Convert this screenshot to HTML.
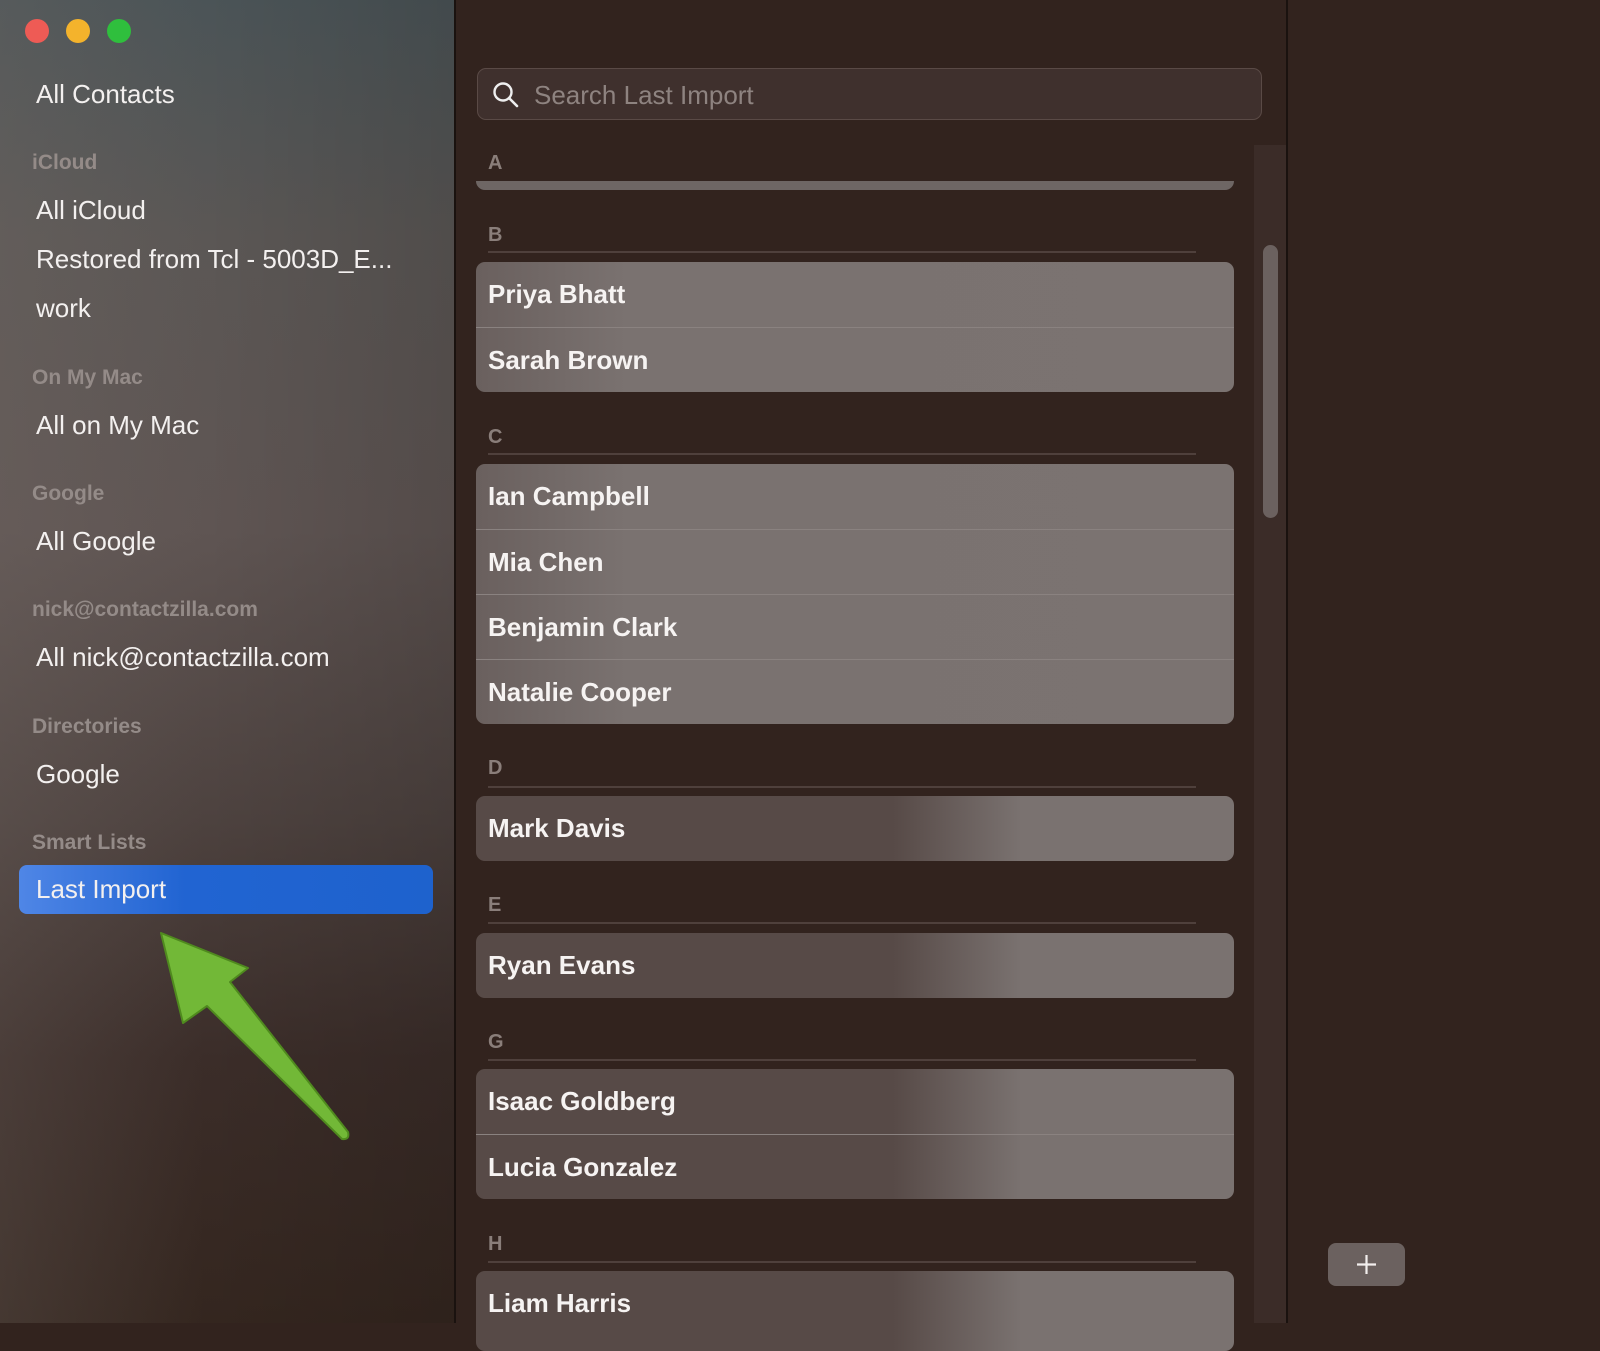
<!DOCTYPE html>
<html><head><meta charset="utf-8"><style>
*{margin:0;padding:0;box-sizing:border-box}
body{width:1600px;height:1323px;overflow:hidden;background:#32231e;font-family:"Liberation Sans",sans-serif;position:relative}
.side{position:absolute;left:0;top:0;width:454px;height:1323px;background:linear-gradient(180deg,#4b5457 0%,#5b5755 18%,#5f5553 40%,#4d423f 62%,#3b2d29 80%,#34261f 100%);}
.side:after{content:"";position:absolute;inset:0;background:linear-gradient(90deg,rgba(120,110,105,.25) 0%,rgba(0,0,0,0) 45%,rgba(0,0,0,.12) 100%)}
.divider{position:absolute;left:454px;top:0;width:2px;height:1323px;background:#1a120f}
.dot{position:absolute;top:19px;width:24px;height:24px;border-radius:50%}
.si{position:absolute;left:36px;color:#f3f0ef;font-size:26px;z-index:2;white-space:nowrap}
.sh{position:absolute;left:32px;color:#948b88;font-size:21px;font-weight:bold;z-index:2}
.sel{position:absolute;left:19px;top:865px;width:414px;height:49px;border-radius:8px;background:linear-gradient(90deg,#4f86e6,#2164d2 40%,#1e62cd);z-index:1}
.search{position:absolute;left:477px;top:68px;width:785px;height:52px;border-radius:9px;background:#3f302d;border:1.5px solid #5a4a46}
.search span{position:absolute;left:56px;top:11px;color:#8e8380;font-size:26px}
.lh{position:absolute;left:488px;color:#8a7e7a;font-size:20px;font-weight:bold}
.ln{position:absolute;left:488px;width:708px;height:2px;background:#4f403c}
.card{position:absolute;left:476px;width:758px;border-radius:9px;overflow:hidden;background:#766e6c}
.row{height:65px;line-height:65px;padding-left:12px;color:#f6f3f2;font-size:26px;font-weight:bold;border-top:1.5px solid #8a8280}
.row:first-child{border-top:none}
.grad{background:linear-gradient(90deg,#574a47 0%,#574a47 55%,#7a7270 72%,#7a7270 100%)}
.gradc{background:linear-gradient(90deg,#6a605e 0%,#7a7270 20%,#7b7371 100%)}
.track{position:absolute;left:1254px;top:145px;width:32px;height:1178px;background:#3b2c28}
.thumb{position:absolute;left:1263px;top:245px;width:15px;height:273px;border-radius:8px;background:#6b615f}
.rdiv{position:absolute;left:1286px;top:0;width:2px;height:1323px;background:#1a120f}
.plus{position:absolute;left:1328px;top:1243px;width:77px;height:43px;border-radius:8px;background:#6b615f}
</style></head><body>
<div class="side"></div>
<div class="dot" style="left:25px;background:#ee5b55"></div>
<div class="dot" style="left:66px;background:#f4b32c"></div>
<div class="dot" style="left:107px;background:#2fbf3d"></div>
<div class="si" style="top:79px">All Contacts</div>
<div class="sh" style="top:151px">iCloud</div>
<div class="si" style="top:195px">All iCloud</div>
<div class="si" style="top:244px">Restored from Tcl - 5003D_E...</div>
<div class="si" style="top:293px">work</div>
<div class="sh" style="top:366px">On My Mac</div>
<div class="si" style="top:410px">All on My Mac</div>
<div class="sh" style="top:482px">Google</div>
<div class="si" style="top:526px">All Google</div>
<div class="sh" style="top:598px">nick@contactzilla.com</div>
<div class="si" style="top:642px">All nick@contactzilla.com</div>
<div class="sh" style="top:715px">Directories</div>
<div class="si" style="top:759px">Google</div>
<div class="sh" style="top:831px">Smart Lists</div>
<div class="sel"></div>
<div class="si" style="top:874px">Last Import</div>
<svg style="position:absolute;left:0;top:0;z-index:3" width="460" height="1323"><path d="M161 933 L248 968 L230 982 L348 1132 Q350 1140 342 1139 L207 1006 L183 1023 Z" fill="#72b837" stroke="#4f8a1e" stroke-width="2" stroke-linejoin="round"/></svg>
<div class="divider"></div>
<div class="search"><svg style="position:absolute;left:14px;top:12px" width="28" height="28"><circle cx="11" cy="11" r="8.5" fill="none" stroke="#eee" stroke-width="2.4"/><line x1="17" y1="17" x2="25" y2="25" stroke="#eee" stroke-width="2.6" stroke-linecap="round"/></svg><span>Search Last Import</span></div>
<div class="lh" style="top:152px">A</div>
<div class="card" style="top:181px;height:9px;border-radius:0 0 9px 9px;background:#6e6664"></div>
<div class="lh" style="top:224px">B</div><div class="ln" style="top:251px"></div>
<div class="card gradc" style="top:262px"><div class="row">Priya Bhatt</div><div class="row">Sarah Brown</div></div>
<div class="lh" style="top:426px">C</div><div class="ln" style="top:453px"></div>
<div class="card gradc" style="top:464px"><div class="row">Ian Campbell</div><div class="row">Mia Chen</div><div class="row">Benjamin Clark</div><div class="row">Natalie Cooper</div></div>
<div class="lh" style="top:757px">D</div><div class="ln" style="top:786px"></div>
<div class="card grad" style="top:796px"><div class="row">Mark Davis</div></div>
<div class="lh" style="top:894px">E</div><div class="ln" style="top:922px"></div>
<div class="card grad" style="top:933px"><div class="row">Ryan Evans</div></div>
<div class="lh" style="top:1031px">G</div><div class="ln" style="top:1059px"></div>
<div class="card grad" style="top:1069px"><div class="row">Isaac Goldberg</div><div class="row">Lucia Gonzalez</div></div>
<div class="lh" style="top:1233px">H</div><div class="ln" style="top:1261px"></div>
<div class="card grad" style="top:1271px;height:80px"><div class="row">Liam Harris</div></div>
<div class="track"></div><div class="thumb"></div>
<div class="rdiv"></div>
<div class="plus"><svg width="77" height="43"><line x1="29" y1="21.5" x2="48" y2="21.5" stroke="#f2eeed" stroke-width="2.2"/><line x1="38.5" y1="12" x2="38.5" y2="31" stroke="#f2eeed" stroke-width="2.2"/></svg></div>
</body></html>
